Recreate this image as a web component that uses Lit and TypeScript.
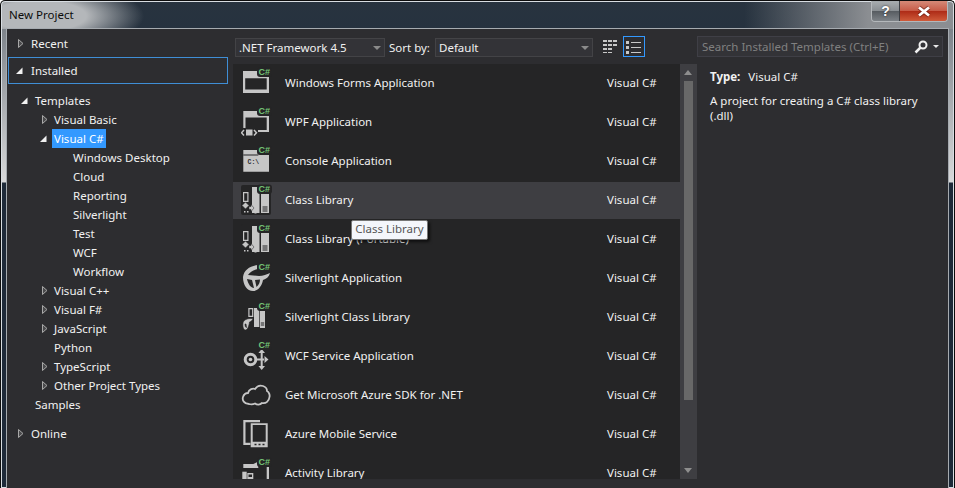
import { LitElement, html, css, svg, nothing } from 'lit';
import { customElement } from 'lit/decorators.js';

type TreeRow = { label: string; x: number; arrow?: 'open' | 'closed'; selected?: boolean };

// x is the text's left edge on the page
const TREE: TreeRow[] = [
  { label: 'Templates', x: 35, arrow: 'open' },
  { label: 'Visual Basic', x: 54, arrow: 'closed' },
  { label: 'Visual C#', x: 54, arrow: 'open', selected: true },
  { label: 'Windows Desktop', x: 73 },
  { label: 'Cloud', x: 73 },
  { label: 'Reporting', x: 73 },
  { label: 'Silverlight', x: 73 },
  { label: 'Test', x: 73 },
  { label: 'WCF', x: 73 },
  { label: 'Workflow', x: 73 },
  { label: 'Visual C++', x: 54, arrow: 'closed' },
  { label: 'Visual F#', x: 54, arrow: 'closed' },
  { label: 'JavaScript', x: 54, arrow: 'closed' },
  { label: 'Python', x: 54 },
  { label: 'TypeScript', x: 54, arrow: 'closed' },
  { label: 'Other Project Types', x: 54, arrow: 'closed' },
  { label: 'Samples', x: 35 },
];

const G = '#c6c6c6';
const BG = '#252526';

// C# badge, sits in the top right corner of most template icons
const badge = svg`
  <rect x="16" y="1.5" width="15" height="9.5" rx="3" fill=${BG}/>
  <text x="17.5" y="9.2" font-family="Liberation Sans, sans-serif" font-size="9" font-weight="bold" fill="#74c476">C#</text>`;

const libArt = svg`
  <rect x="0" y="2" width="30" height="30" rx="2" fill=${BG}/>
  <path d="M2 9h5.500v10H2zM3.200 10.200v7.600h3.100v-7.600z" fill=${G} fill-rule="evenodd"/>
  <rect x="11" y="4" width="7.500" height="26" fill=${G}/>
  <path d="M18 4h2v1.500h-2z" fill=${G}/>
  <rect x="20" y="11" width="8" height="19" fill=${G}/>
  <path d="M21.500 24h5M21.500 26h5M21.500 28h5" stroke=${BG}/>
  <path d="M4.500 19l3.500 3.500-3.500 3.500-3.500-3.500z" fill=${G} stroke=${BG} stroke-width=".6"/>
  <path d="M8 23.500h2v-2l3 3.500-3 3.500v-2H8z" fill=${G} stroke=${BG} stroke-width=".5"/>
  <path d="M3 28h1.500v1.500H3zM6 28h1.500v1.500H6zM12.500 21h2v1.500h-2zM13.500 29h2v1.500h-2z" fill=${G}/>`;

const ICONS: Record<string, unknown> = {
  forms: svg`<path d="M2 5h16v5h10v17H2zM4.200 12.300v11.200h21.500V12.300z" fill=${G} fill-rule="evenodd"/>${badge}`,
  wpf: svg`<path d="M2.300 6H18v4h10v17H17v-2h8.700V12.500H4.500V23H2.300z" fill=${G}/>
    <path d="M3 25l-2.500 2.700L3 30.500" fill="none" stroke=${G} stroke-width="1.500"/>
    <rect x="5" y="24.500" width="6.500" height="6" fill=${G}/>
    <path d="M13 25l2.500 2.700L13 30.500" fill="none" stroke=${G} stroke-width="1.500"/>${badge}`,
  console: svg`<path d="M2.300 6H18v4h10v17.700H2.300z" fill=${G}/>
    <rect x="2.300" y="10.500" width="15" height="1" fill=${BG}/>
    <text x="6.500" y="20" font-family="Liberation Mono, monospace" font-size="6.500" font-weight="bold" fill="#2d2d30">C:\\</text>${badge}`,
  lib: svg`${libArt}${badge}`,
  silverlight: svg`<path fill-rule="evenodd" fill=${G} d="M2 16C3 9 9 5 17 4v4c-5 1-8 3-10 6l11 1c4 0 8-2 11-3-1 4-4 6-7 7-1 6-5 11-10 11C6 30 2 24 2 16zM6 18c1 5 4 9 7 9l-2-8zM14 19l1.500 7c2.500-2 3.500-5 3.500-7.500z"/>${badge}`,
  sllib: svg`<path d="M7.300 8h5v9h-5zM8.500 9.200v6.600h2.600V9.200z" fill=${G} fill-rule="evenodd"/>
    <rect x="13" y="8" width="5.300" height="19" fill=${G}/>
    <rect x="19" y="10" width="5" height="18" fill=${G}/>
    <path d="M19.800 23h3.400M19.800 25h3.400" stroke=${BG}/>
    <path fill-rule="evenodd" fill=${G} stroke=${BG} stroke-width=".6" d="M2 23c.5-3 4-5 10-4.500-.5 2-2 3-3.500 3.500-.5 4-2 8-4 8-2 0-3-3-2.500-7zM4 24c0 2 .5 3.500 1.500 3.500L5 24z"/>${badge}`,
  wcf: svg`<circle cx="9.500" cy="20.500" r="5.300" fill="none" stroke=${G} stroke-width="3"/>
    <circle cx="9.500" cy="20.500" r="1.800" fill=${G}/>
    <path d="M15 20.500h8M20.700 13v15.500" stroke=${G} stroke-width="2" fill="none"/>
    <path d="M20.700 10l3.300 4h-6.600zM27.500 20.500L23.500 17v7zM20.700 31l-3.300-4h6.600z" fill=${G}/>${badge}`,
  cloud: svg`<path d="M8 26C3 26 1 22 2 19c1-3 3-4 5-4 1-4 5-5 7-4 2-3 5-4 8-3 3 1 4 3 4 5 2 1 3 4 2.500 6-.5 4-3.500 7-7.500 6-2 2-5 2-7 .5-2 1-4 1-6 .5z" fill="none" stroke=${G} stroke-width="1.800"/>`,
  mobile: svg`<path d="M2.300 3H19v2.300H4.500v20.500h5V28H2.300z" fill=${G}/>
    <path d="M9.700 6.300h17v24h-17zM11.700 8v16.700h13V8z" fill=${G} fill-rule="evenodd"/>
    <path d="M13.500 27.500h2M17.500 27.500h2M21.500 27.500h2" stroke=${BG} stroke-width="1.500"/>`,
  activity: svg`<path d="M2.300 8h10l5-2.500v6.500h-15z" fill=${G}/>
    <rect x="25.700" y="10" width="2.300" height="16" fill=${G}/>
    <rect x="1.300" y="15.700" width="4.400" height="8" fill=${G}/>
    <path d="M6.300 17h6v8h-6zM7.500 18.500v2.500h3.500v-2.500z" fill=${G} fill-rule="evenodd"/>${badge}`,
};

const TEMPLATES: [string, string][] = [
  ['Windows Forms Application', 'forms'],
  ['WPF Application', 'wpf'],
  ['Console Application', 'console'],
  ['Class Library', 'lib'],
  ['Class Library (Portable)', 'lib'],
  ['Silverlight Application', 'silverlight'],
  ['Silverlight Class Library', 'sllib'],
  ['WCF Service Application', 'wcf'],
  ['Get Microsoft Azure SDK for .NET', 'cloud'],
  ['Azure Mobile Service', 'mobile'],
  ['Activity Library', 'activity'],
];

@customElement('app-root')
export class AppRoot extends LitElement {
  static styles = css`
    :host {
      display: block;
      width: 955px;
      height: 488px;
      overflow: hidden;
      font-family: 'Noto Sans', 'Open Sans', sans-serif;
      font-size: 11.5px;
      color: #f1f1f1;
    }
    .frame {
      box-sizing: border-box;
      height: 488px;
      display: flex;
      flex-direction: column;
      padding: 0 5px;
      border: 1px solid #0d0d0d;
      border-bottom: none;
      border-radius: 5px 5px 0 0;
      box-shadow: inset 0 0 0 1px #d8dde2;
      position: relative;
      background:
        radial-gradient(ellipse 105px 34px at 38px 15px, #b4b7ba 45%, rgba(150, 154, 158, 0) 100%) 0 0 / 100% 28px no-repeat,
        linear-gradient(90deg, rgba(139, 142, 146, 0) 78%, #8b8e92 91%) 0 0 / 100% 28px no-repeat,
        linear-gradient(#28333f, #26323f) 0 0 / 100% 28px no-repeat,
        linear-gradient(#7d838a 28px, #d8d9da 181px, #1e2a39 182px);
    }
    .title-bar {
      height: 27px;
      flex: none;
      display: flex;
      align-items: center;
      color: #0c0c0c;
      padding-left: 3px;
    }
    .caption {
      position: absolute;
      top: 0;
      right: 6px;
      display: flex;
      height: 20px;
      border: 1px solid #b4b8bb;
      border-top: none;
      border-radius: 0 0 4px 4px;
      overflow: hidden;
    }
    .caption span {
      display: flex;
      align-items: center;
      justify-content: center;
    }
    .help {
      width: 27px;
      font-family: 'Liberation Sans', sans-serif;
      font-size: 14px;
      font-weight: bold;
      color: #fff;
      text-shadow: 0 0 2px #222;
      background: linear-gradient(#a8adb0, #8a8f93 48%, #565b60 50%, #7d8287);
      border-right: 1px solid #3b3f44;
    }
    .close {
      width: 47px;
      background: linear-gradient(#d68a78, #c75c48 48%, #ad2a16 50%, #cf5b3a);
    }
    .body {
      flex: 1;
      display: flex;
      background: #2d2d30;
      border: 1px solid #a6abb0;
      border-bottom: none;
      min-height: 0;
    }
    .side {
      width: 226px;
      flex: none;
    }
    .group {
      height: 19px;
      display: flex;
      align-items: center;
      position: relative;
      padding-left: 24px;
    }
    .group.recent {
      margin-top: 5px;
    }
    .group.installed {
      box-sizing: border-box;
      height: 27px;
      width: 220px;
      margin: 4px 0 7px 1px;
      border: 1px solid #3f8ed6;
      padding-left: 22px;
    }
    .group.online {
      margin-top: 10px;
    }
    .row {
      height: 19px;
      display: flex;
      align-items: center;
      position: relative;
    }
    .name {
      margin-left: -2px;
      padding: 0 2px;
      line-height: 19px;
    }
    .name.sel {
      background: #3399ff;
      color: #fff;
    }
    .arrow {
      position: absolute;
      width: 7px;
      height: 9px;
    }
    .main {
      width: 464px;
      flex: none;
      display: flex;
      flex-direction: column;
    }
    .toolbar {
      box-sizing: border-box;
      height: 35px;
      flex: none;
      display: flex;
      align-items: center;
      padding: 2px 0 0 2px;
    }
    .combo {
      box-sizing: border-box;
      height: 19px;
      background: #333337;
      border: 1px solid #434346;
      display: flex;
      align-items: center;
      padding-left: 3px;
      position: relative;
    }
    .combo::after {
      content: '';
      position: absolute;
      right: 3px;
      top: 7px;
      border: 4px solid transparent;
      border-top-color: #8a8a8a;
      border-bottom: none;
    }
    .combo.fw {
      width: 150px;
    }
    .combo.sort {
      width: 158px;
    }
    .sort-label {
      width: 50px;
      flex: none;
      box-sizing: border-box;
      padding-left: 4px;
    }
    .view {
      box-sizing: border-box;
      width: 22px;
      height: 21px;
      margin-bottom: 2px;
      display: flex;
      align-items: center;
      justify-content: center;
    }
    .view.grid {
      margin-left: 7px;
    }
    .view.list {
      margin-left: 1px;
      border: 1px solid #3399ff;
    }
    .content {
      flex: 1;
      display: flex;
      margin-bottom: 9px;
      min-height: 0;
    }
    .items {
      flex: 1;
      background: #252526;
      overflow: hidden;
      padding-top: 1px;
    }
    .item {
      height: 37px;
      margin-bottom: 2px;
      display: flex;
      align-items: center;
      position: relative;
    }
    .item.hot {
      background: #3e3e42;
    }
    .item svg {
      position: absolute;
      left: 8px;
      top: 1px;
    }
    .label {
      margin-left: 52px;
      flex: 1;
      padding-bottom: 2px;
    }
    .lang {
      width: 73px;
      padding-bottom: 2px;
    }
    .scroll {
      width: 17px;
      flex: none;
      background: #3e3e42;
      position: relative;
    }
    .thumb {
      position: absolute;
      left: 4px;
      width: 9px;
      top: 17px;
      height: 319px;
      background: #686868;
    }
    .scroll i {
      position: absolute;
      left: 4px;
      border: 4.5px solid transparent;
    }
    .scroll i.up {
      top: 6px;
      border-top: none;
      border-bottom: 5px solid #8e8e8e;
    }
    .scroll i.down {
      bottom: 6px;
      border-bottom: none;
      border-top: 5px solid #8e8e8e;
    }
    .details {
      flex: 1;
      min-width: 0;
    }
    .search {
      box-sizing: border-box;
      height: 21px;
      width: 246px;
      margin: 7px 0 12px;
      background: #333337;
      border: 1px solid #3f3f46;
      display: flex;
      align-items: center;
      padding-left: 4px;
      color: #808080;
      position: relative;
    }
    .search svg {
      position: absolute;
      right: 14px;
      top: 3px;
    }
    .search::after {
      content: '';
      position: absolute;
      right: 3px;
      top: 8px;
      border: 3px solid transparent;
      border-top-color: #e8e8e8;
      border-bottom: none;
    }
    .info {
      padding-left: 13px;
    }
    .type {
      line-height: 16px;
    }
    .type b {
      font-weight: bold;
      margin-right: 5px;
    }
    .info p {
      margin: 8px 0 0;
      width: 225px;
      line-height: 15px;
    }
    .tooltip {
      position: absolute;
      left: 350px;
      top: 219px;
      box-sizing: border-box;
      width: 77px;
      height: 20px;
      padding-bottom: 3px;
      background: #f4f6fb;
      border: 1px solid #767676;
      border-radius: 2px;
      box-shadow: 2px 2px 3px rgba(0, 0, 0, 0.6);
      color: #575757;
      display: flex;
      align-items: center;
      justify-content: center;
    }
  `;

  private arrow(kind: 'open' | 'closed', left: number) {
    const open = svg`<path d="M0 8h6.500V1.500z" fill="#f1f1f1"/>`;
    const closed = svg`<path d="M.5.5v8l4.500-4z" fill="#4a4a4c" stroke="#a8a8a8"/>`;
    return html`<svg class="arrow" style="left:${left}px" viewBox="0 0 7 9">
      ${kind === 'open' ? open : closed}
    </svg>`;
  }

  private renderRow(r: TreeRow) {
    // the sidebar starts 7px in from the window edge
    const x = r.x - 7;
    return html`<div class="row" style="padding-left:${x}px">
      ${r.arrow ? this.arrow(r.arrow, r.arrow === 'open' ? x - 14 : x - 12) : nothing}
      <span class="name ${r.selected ? 'sel' : ''}">${r.label}</span>
    </div>`;
  }

  render() {
    return html`
      <div class="frame">
        <div class="title-bar">New Project</div>
        <div class="caption">
          <span class="help">?</span>
          <span class="close">
            <svg width="16" height="13" viewBox="0 0 16 13">
              <path d="M3 2.500l10 8M13 2.500l-10 8" stroke="#5a1a10" stroke-width="4.500" opacity=".6"/>
              <path d="M3 2.500l10 8M13 2.500l-10 8" stroke="#fff" stroke-width="2.800"/>
            </svg>
          </span>
        </div>
        <div class="body">
          <div class="side">
            <div class="group recent">${this.arrow('closed', 11)}Recent</div>
            <div class="group installed">${this.arrow('open', 7)}Installed</div>
            ${TREE.map((r) => this.renderRow(r))}
            <div class="group online">${this.arrow('closed', 11)}Online</div>
          </div>
          <div class="main">
            <div class="toolbar">
              <div class="combo fw">.NET Framework 4.5</div>
              <span class="sort-label">Sort by:</span>
              <div class="combo sort">Default</div>
              <div class="view grid">
                <svg width="16" height="15" viewBox="0 0 16 15" fill="#c8c8c8">
                  <path d="M0 1h4v2H0zM5 1h4v2H5zM10 1h4v2h-4zM0 5h4v2H0zM5 5h4v2H5zM10 5h4v2h-4zM0 9h4v2H0zM5 9h4v2H5zM0 13h4v1H0zM5 13h4v1H5z"/>
                </svg>
              </div>
              <div class="view list">
                <svg width="16" height="14" viewBox="0 0 16 14" fill="#c8c8c8">
                  <path d="M0 1h3v3H0zM0 6h3v3H0zM0 11h3v3H0zM5 2h10v1H5zM5 7h10v1H5zM5 12h10v1H5z"/>
                </svg>
              </div>
            </div>
            <div class="content">
              <div class="items">
                ${TEMPLATES.map(
                  ([name, icon], i) => html`<div class="item ${i === 3 ? 'hot' : ''}">
                    <svg width="36" height="33" viewBox="0 0 36 33">${ICONS[icon]}</svg>
                    <span class="label">${name}</span>
                    <span class="lang">Visual C#</span>
                  </div>`
                )}
              </div>
              <div class="scroll">
                <i class="up"></i>
                <div class="thumb"></div>
                <i class="down"></i>
              </div>
            </div>
          </div>
          <div class="details">
            <div class="search">
              Search Installed Templates (Ctrl+E)
              <svg width="14" height="14" viewBox="0 0 14 14" fill="none" stroke="#f0f0f0" stroke-width="2">
                <circle cx="9" cy="5" r="3.500"/><path d="M6.500 7.500L1.500 12.500" stroke-width="2.500"/>
              </svg>
            </div>
            <div class="info">
              <div class="type"><b>Type:</b> Visual C#</div>
              <p>A project for creating a C# class library (.dll)</p>
            </div>
          </div>
        </div>
        <div class="tooltip">Class Library</div>
      </div>
    `;
  }
}
